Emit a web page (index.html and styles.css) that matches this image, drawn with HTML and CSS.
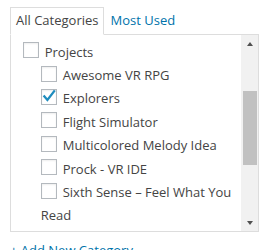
FILE: index.html
```html
<!doctype html>
<html>
<head>
<meta charset="utf-8">
<title>Categories</title>
<link rel="stylesheet" href="styles.css">
</head>
<body>
<div class="categorydiv">
	<ul class="category-tabs">
		<li class="tab active"><a href="#all">All Categories</a></li>
		<li class="tab"><a href="#pop">Most Used</a></li>
	</ul>
	<div class="tabs-panel">
		<div class="list-view" id="view">
			<ul class="checklist">
				<li><label><span class="box"></span>Design</label></li>
				<li><label><span class="box"></span>Games</label></li>
				<li><label><span class="box"></span>News</label></li>
				<li><label><span class="box"></span>Podcast</label></li>
				<li id="first"><label><span class="box"></span>Projects</label>
					<ul class="children">
						<li><label><span class="box"></span>Awesome VR RPG</label></li>
						<li><label><span class="box"><svg width="16" height="16" viewBox="0 0 16 16"><polyline points="2.6,6.6 6.4,11 13.8,1.4" /></svg></span>Explorers</label></li>
						<li><label><span class="box"></span>Flight Simulator</label></li>
						<li><label><span class="box"></span>Multicolored Melody Idea</label></li>
						<li><label><span class="box"></span>Prock - VR IDE</label></li>
						<li><label><span class="box"></span>Sixth Sense – Feel What You Read</label></li>
					</ul>
				</li>
				<li><label><span class="box"></span>Reviews</label></li>
				<li><label><span class="box"></span>Tutorials</label></li>
				<li><label><span class="box"></span>Uncategorized</label></li>
				<li><label><span class="box"></span>Videos</label></li>
			</ul>
		</div>
		<div class="scrollbar">
			<div class="sb-button"><span class="arrow up"></span></div>
			<div class="sb-track"><div class="sb-thumb"></div></div>
			<div class="sb-button"><span class="arrow down"></span></div>
		</div>
	</div>
	<p class="adder"><a href="#add">+ Add New Category</a></p>
</div>
<script src="script.js"></script>
</body>
</html>
```

FILE: styles.css
```css
body
{
	margin: 0;
	background: #fff;
	color: #444;
	font-family: "Open Sans", "Liberation Sans", sans-serif;
	font-size: 13px;
}
a
{
	color: #0073aa;
	text-decoration: none;
}
.categorydiv
{
	padding: 0 11px 0 10px;
}
.category-tabs
{
	display: flex;
	margin: 7px 0 -1px;
	padding: 0;
	list-style: none;
}
.tab
{
	padding: 3px 5px 5px;
	line-height: 18px;
	border: 1px solid transparent;
}
.tab.active
{
	position: relative;
	z-index: 1;
	border-color: #ddd;
	border-bottom-color: #fff;
	background: #fff;
}
.tab.active a
{
	color: #444;
}
.tabs-panel
{
	display: flex;
	box-sizing: border-box;
	height: 198px;
	padding-left: 0.9em;
	border: 1px solid #ddd;
	background: #fff;
}
.list-view
{
	position: relative;
	flex: 1;
	min-width: 0;
	overflow: hidden;
	padding-right: 4px;
}
.checklist
{
	margin: 0;
	padding: 21px 0;
	list-style: none;
}
.checklist ul
{
	margin: 0 0 6px 18px;
	padding: 0;
	list-style: none;
}
.checklist li
{
	line-height: 23.4px;
	word-wrap: break-word;
}
.box
{
	display: inline-block;
	box-sizing: border-box;
	width: 16px;
	height: 16px;
	margin: -6px 6px 0 0;
	vertical-align: middle;
	border: 1px solid #b4b9be;
	background: #fff;
	box-shadow: inset 0 1px 2px rgba(0,0,0,.07);
}
.box svg
{
	display: block;
	margin: -1px;
	overflow: visible;
}
.box polyline
{
	fill: none;
	stroke: #1e8cbe;
	stroke-width: 2.3;
}

/* scrollbar column */
.scrollbar
{
	display: flex;
	flex-direction: column;
	width: 17px;
	background: #f1f1f1;
}
.sb-button
{
	display: flex;
	align-items: center;
	justify-content: center;
	height: 17px;
}
.sb-track
{
	flex: 1;
}
.sb-thumb
{
	height: 74px;
	margin: 39px 1px 0 2px;
	background: #c1c1c1;
}
.arrow
{
	width: 0;
	height: 0;
	border-left: 3.5px solid transparent;
	border-right: 3.5px solid transparent;
}
.arrow.up
{
	border-bottom: 4px solid #505050;
}
.arrow.down
{
	border-top: 4px solid #505050;
}

.adder
{
	margin: 9px 0 0;
	line-height: 19.5px;
}
.adder a
{
	text-decoration: underline;
}
```

FILE: script.js
```js
var view = document.getElementById('view');
var first = document.getElementById('first');
view.scrollTop = first.offsetTop - 6;
```
